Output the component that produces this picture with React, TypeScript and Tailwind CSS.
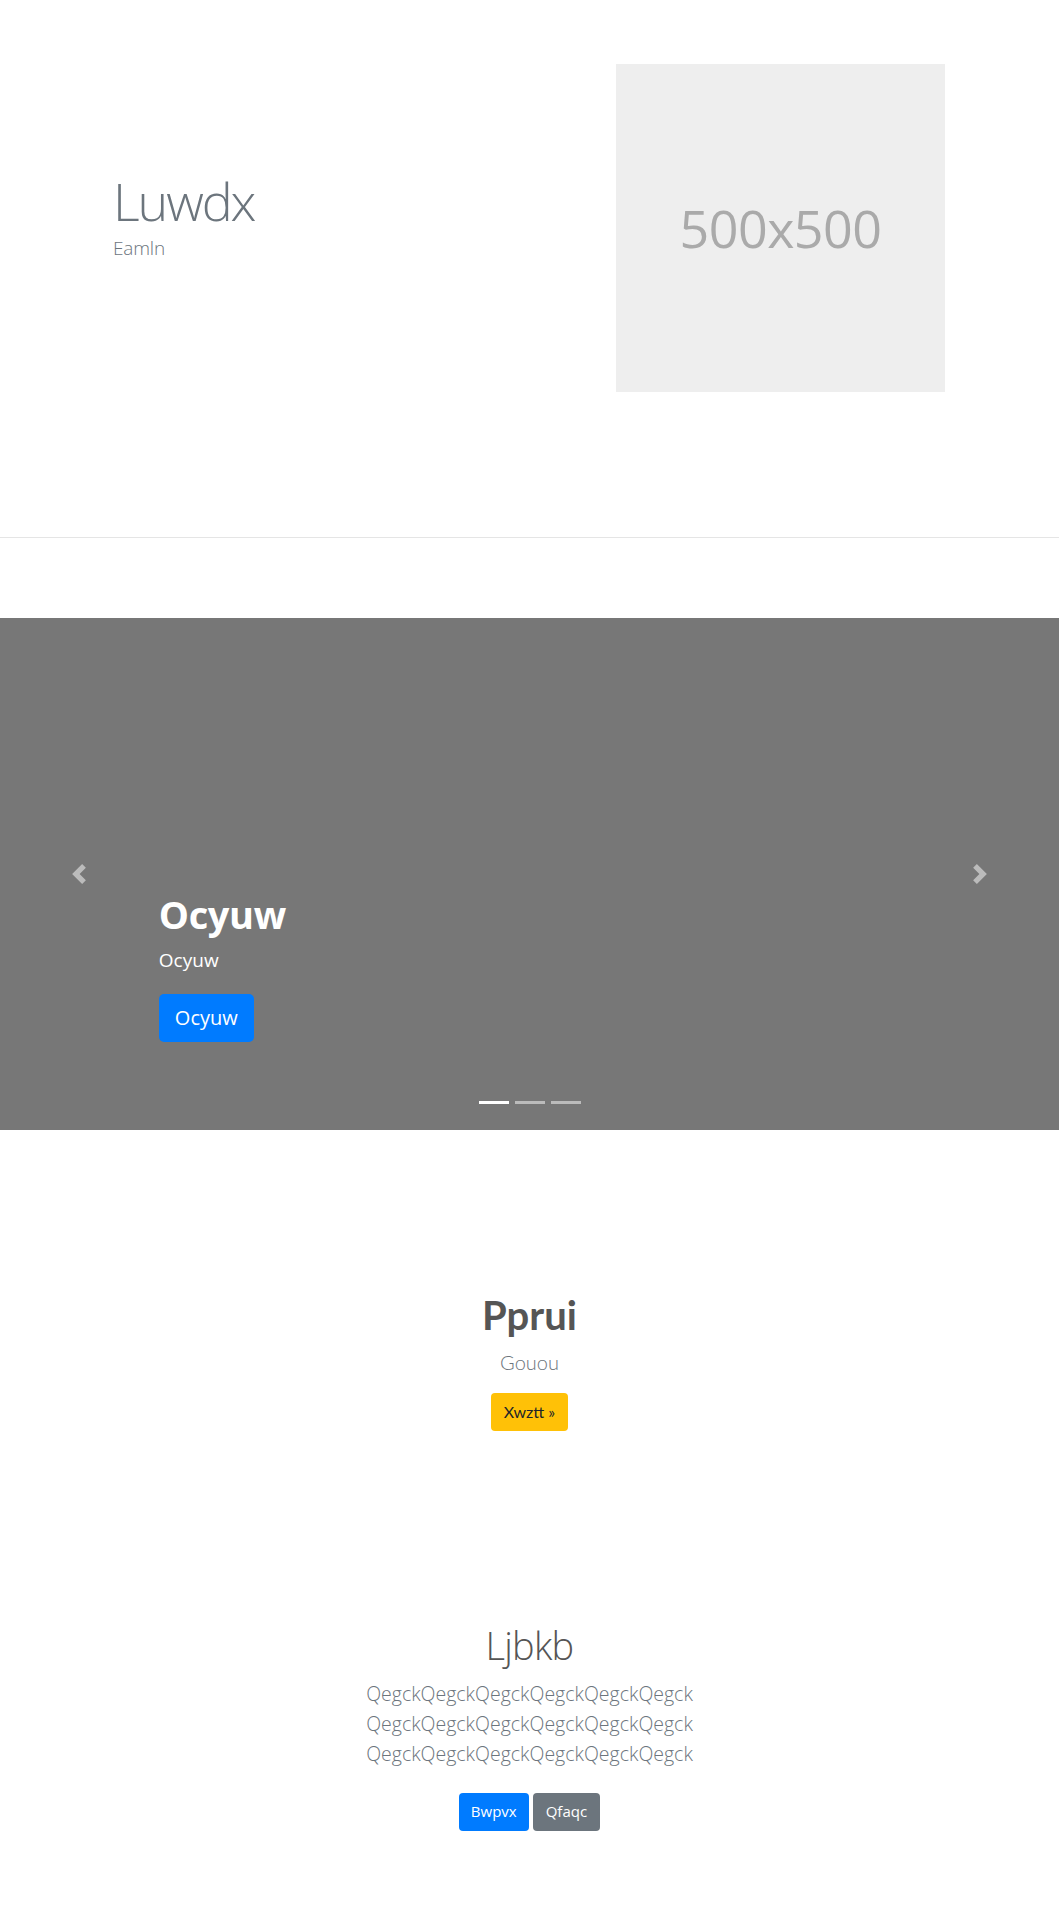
const segoe = "font-['Open_Sans','Noto_Sans',sans-serif]";
const lato = "font-['Lato','Open_Sans',sans-serif]";

const Arrow = ({ dir }: { dir: "prev" | "next" }) => (
  <svg width="20" height="20" viewBox="0 0 8 8" fill="#fff" className="opacity-50">
    {dir === "prev" ? (
      <path d="M5.25 0l-4 4 4 4 1.5-1.5L4.25 4l2.5-2.5L5.25 0z" />
    ) : (
      <path d="M2.75 0l-1.5 1.5L3.75 4l-2.5 2.5L2.75 8l4-4-4-4z" />
    )}
  </svg>
);

const Hero = () => (
  <section className="flex items-start pt-[64px] pb-[145px] border-b border-[#e5e5e5]">
    <div className="flex-1 pl-[113px] pt-[106px]">
      <h1 className={`${segoe} text-[52px] leading-[1.2] font-light tracking-[-0.04em] text-[#6c757d] mb-[1px]`}>
        Luwdx
      </h1>
      <p className={`${segoe} text-[19px] leading-[30px] font-light tracking-[-0.01em] text-[#6c757d]`}>Eamln</p>
    </div>
    <div className="w-[329px] h-[328px] mr-[114px] bg-[#eeeeee] flex items-center justify-center">
      <span className={`${segoe} text-[52px] tracking-[-0.01em] text-[#aaaaaa]`}>500x500</span>
    </div>
  </section>
);

const Carousel = () => {
  const slides = [0, 1, 2];
  return (
    <section className="mt-[80px] relative h-[512px] bg-[#777777] flex">
      <div className="w-[15%] flex items-center justify-center">
        <Arrow dir="prev" />
      </div>
      <div className="flex-1 flex flex-col justify-end pb-[88px]">
        <h2 className={`${segoe} text-[38px] leading-[1.2] font-bold tracking-[-0.01em] text-white mb-2`}>Ocyuw</h2>
        <p className={`${segoe} text-[19px] leading-[28px] text-white mb-5`}>Ocyuw</p>
        <div>
          <button className={`${segoe} h-[48px] px-4 text-[20px] leading-[30px] text-white bg-[#007bff] rounded-[5px]`}>
            Ocyuw
          </button>
        </div>
      </div>
      <div className="w-[15%] flex items-center justify-center">
        <Arrow dir="next" />
      </div>
      <ol className="absolute bottom-[26px] left-0 right-0 flex justify-center">
        {slides.map((i) => (
          <li
            key={i}
            className={`w-[30px] h-[3px] mx-[3px] ${i === 0 ? "bg-white" : "bg-white/50"}`}
          />
        ))}
      </ol>
    </section>
  );
};

const Promo = () => (
  <section className="pt-[161px] flex flex-col items-center text-center">
    <h2 className={`${lato} text-[40px] leading-[1.2] font-bold text-[#555555] mb-2`}>Pprui</h2>
    <p className={`${lato} text-[20px] leading-[30px] font-light text-[#6c757d] mb-4`}>Gouou</p>
    <button className={`${lato} h-[38px] px-[13px] text-[16px] text-[#212529] bg-[#ffc107] rounded-[4px]`}>
      Xwztt &raquo;
    </button>
  </section>
);

const Closing = () => {
  const line = "Qegck".repeat(6);
  return (
    <section className="pt-[192px] pb-[90px] flex flex-col items-center text-center">
      <h2 className={`${segoe} text-[38px] leading-[1.2] font-light tracking-[-0.02em] text-[#555555] mb-[10px]`}>
        Ljbkb
      </h2>
      <p className={`${segoe} text-[19.5px] leading-[30px] font-light text-[#6c757d] mb-6`}>
        {line}
        <br />
        {line}
        <br />
        {line}
      </p>
      <div className="flex gap-1">
        <button className={`${segoe} h-[38px] px-3 text-[15px] text-white bg-[#007bff] rounded-[4px]`}>Bwpvx</button>
        <button className={`${segoe} h-[38px] px-[13px] text-[15px] text-white bg-[#6c757d] rounded-[4px]`}>Qfaqc</button>
      </div>
    </section>
  );
};

const App = () => (
  <div className="bg-white min-h-[1920px]">
    <Hero />
    <Carousel />
    <Promo />
    <Closing />
  </div>
);

export default App;
